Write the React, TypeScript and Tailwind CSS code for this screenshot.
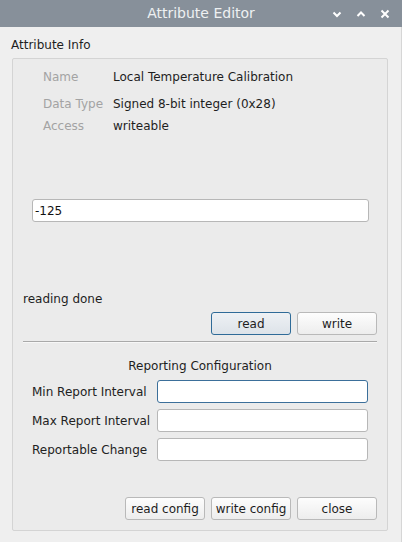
import React from 'react';

const font = { fontFamily: '"DejaVu Sans", "Liberation Sans", sans-serif' };

const Btn = ({ label, focused = false }: { label: string; focused?: boolean }) => (
  <button
    className={
      focused
        ? 'w-[80px] h-[23px] rounded-[3px] border border-[#2f6b98] bg-gradient-to-b from-[#eef1f4] to-[#dde3e9] text-[12px] text-[#1e1e1e] leading-none'
        : 'w-[80px] h-[23px] rounded-[3px] border border-[#b9b9b9] bg-gradient-to-b from-[#fdfdfd] to-[#ededed] text-[12px] text-[#1e1e1e] leading-none'
    }
  >
    {label}
  </button>
);

const Field = ({ value = '', focused = false, width }: { value?: string; focused?: boolean; width: string }) => (
  <div
    className={
      (focused ? 'border-[#3b6f9a] ' : 'border-[#b7b7b7] ') +
      width +
      ' h-[23px] rounded-[3px] border bg-white flex items-center px-[2px] text-[12px] text-[#111]'
    }
  >
    {value}
  </div>
);

const ConfigRow = ({ label, focused = false }: { label: string; focused?: boolean }) => (
  <div className="flex items-center h-[23px]">
    <span className="w-[144px] shrink-0 pl-[19px] text-[12px] text-[#222] whitespace-nowrap">{label}</span>
    <Field width="w-[211px]" focused={focused} />
  </div>
);

const InfoRow = ({ label, value, mt }: { label: string; value: string; mt: string }) => (
  <div className={'flex items-center h-[17px] ' + mt}>
    <span className="w-[100px] shrink-0 pl-[30px] text-[#a3a3a3] whitespace-nowrap">{label}</span>
    <span className="text-[#1e1e1e]">{value}</span>
  </div>
);

export default function App() {
  return (
    <div style={font} className="w-[402px] h-[542px] bg-[#efefef] flex flex-col overflow-hidden">
      <div className="h-[27px] bg-[#87909a] flex items-center relative shrink-0">
        <span className="w-full text-center text-[14px] text-[#eef0f2]">Attribute Editor</span>
        <div className="absolute right-[12px] top-0 h-[27px] flex items-center gap-[14px]">
          <svg width="10" height="8" viewBox="0 0 10 8">
            <path d="M1.5 2.5 L5 6 L8.5 2.5" fill="none" stroke="#fff" strokeWidth="2" />
          </svg>
          <svg width="10" height="8" viewBox="0 0 10 8">
            <path d="M1.5 6 L5 2.5 L8.5 6" fill="none" stroke="#fff" strokeWidth="2" />
          </svg>
          <svg width="10" height="10" viewBox="0 0 10 10">
            <path d="M1.5 1.5 L8.5 8.5 M8.5 1.5 L1.5 8.5" fill="none" stroke="#fff" strokeWidth="2" />
          </svg>
        </div>
      </div>
      <div className="flex-1 flex border-r border-[#d6d6d6]">
        <div className="flex-1 flex flex-col pl-[12px] pr-[13px]">
          <div className="h-[31px] flex items-end pb-[4px] text-[12px] text-[#1e1e1e]">
            <span className="-ml-[1px]">Attribute Info</span>
          </div>
          <div className="w-[376px] h-[473px] border border-[#d4d4d4] rounded-[2px] bg-[#ebebeb] flex flex-col">
            <div className="flex flex-col pt-[9px] text-[12px]">
              <InfoRow label="Name" value="Local Temperature Calibration" mt="" />
              <InfoRow label="Data Type" value="Signed 8-bit integer (0x28)" mt="mt-[10px]" />
              <InfoRow label="Access" value="writeable" mt="mt-[5px]" />
            </div>
            <div className="pl-[19px] mt-[65px]">
              <Field value="-125" width="w-[337px]" />
            </div>
            <div className="pl-[10px] mt-[68px] h-[17px] flex items-center text-[12px] text-[#1e1e1e]">reading done</div>
            <div className="flex justify-end gap-[6px] pr-[10px] mt-[5px]">
              <Btn label="read" focused />
              <Btn label="write" />
            </div>
            <div className="mx-[10px] mt-[6px] h-[2px] border-t border-[#a9a9a9] border-b border-b-[#f7f7f7]" />
            <div className="text-center text-[12px] text-[#1e1e1e] mt-[15px] h-[17px] leading-[17px]">Reporting Configuration</div>
            <div className="flex flex-col gap-[6px] mt-[5px]">
              <ConfigRow label="Min Report Interval" focused />
              <ConfigRow label="Max Report Interval" />
              <ConfigRow label="Reportable Change" />
            </div>
            <div className="flex justify-end gap-[6px] pr-[10px] mt-auto mb-[10px]">
              <Btn label="read config" />
              <Btn label="write config" />
              <Btn label="close" />
            </div>
          </div>
        </div>
      </div>
    </div>
  );
}
